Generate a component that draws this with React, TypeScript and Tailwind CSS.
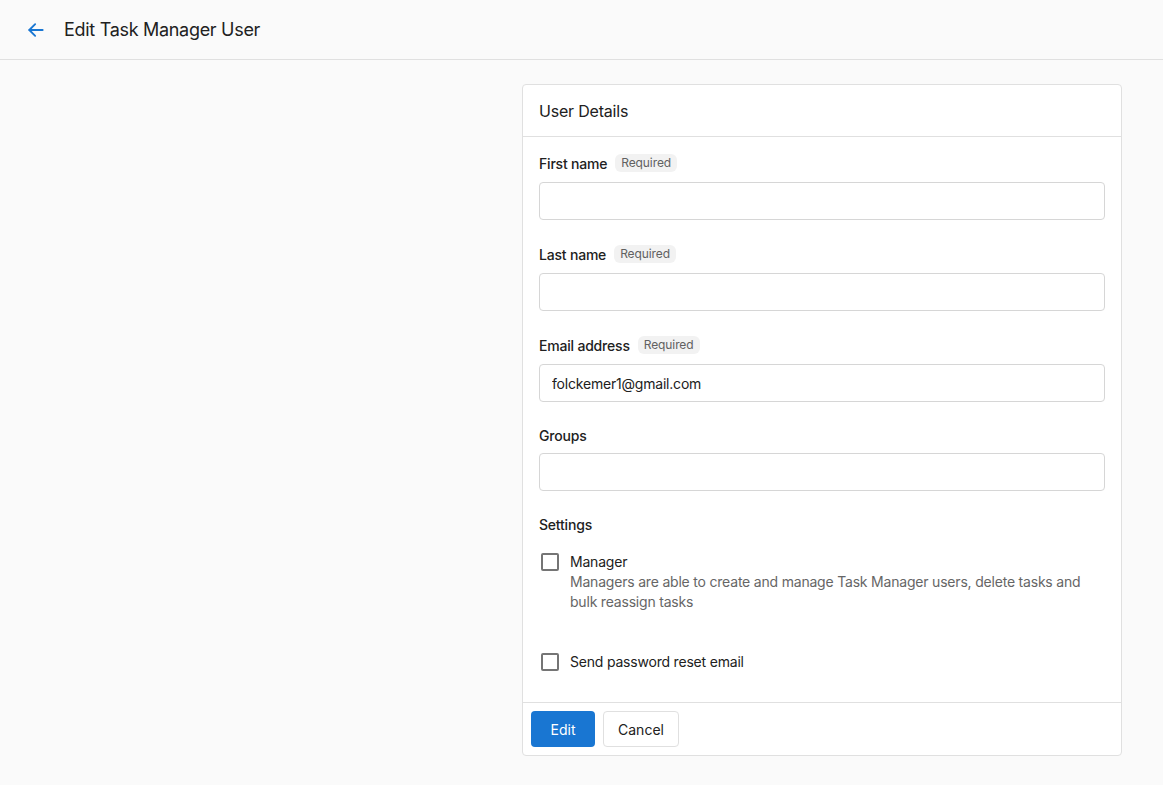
import React from "react"

function Field({ label, required, value }: { label: string; required?: boolean; value?: string }) {
  return (
    <div className="flex flex-col">
      <div className={`flex items-center gap-2 ${required ? "h-5" : "h-[18px]"}`}>
        <span className="text-[14px] font-medium tracking-[-0.2px] text-[#212121]">{label}</span>
        {required && (
          <span className="rounded-md bg-[#f2f2f2] px-[6px] h-[18px] flex items-center text-[12px] tracking-[-0.1px] text-[#616161]">
            Required
          </span>
        )}
      </div>
      <input
        defaultValue={value}
        className="mt-[9px] h-[38px] w-full rounded-[4px] border border-[#d6d6d6] bg-white px-3 text-[14px] tracking-[-0.2px] text-[#212121] outline-none"
      />
    </div>
  )
}

function Check({ label, help }: { label: string; help?: string }) {
  return (
    <label className="flex items-start gap-[11px] pl-[2px]">
      <span className="mt-[1px] h-[18px] w-[18px] shrink-0 rounded-[2px] border-2 border-[#757575] bg-white" />
      <span className="flex flex-col text-[14px] leading-5 tracking-[-0.2px]">
        <span className="text-[#212121]">{label}</span>
        {help && <span className="text-[#666666]">{help}</span>}
      </span>
    </label>
  )
}

export default function App() {
  return (
    <div className="min-h-[785px] bg-[#fafafa] font-['Inter',sans-serif] text-[#212121]">
      <header className="flex h-[60px] items-center border-b border-[#e0e0e0] px-[26px]">
        <svg width="20" height="20" viewBox="0 0 24 24" fill="none" stroke="#1976d2" strokeWidth="2.2" strokeLinecap="round" strokeLinejoin="round">
          <path d="M20 12H4" />
          <path d="M11 5l-7 7 7 7" />
        </svg>
        <h1 className="ml-[18px] text-[18px] font-normal tracking-[-0.3px]">Edit Task Manager User</h1>
      </header>

      <main className="flex pt-6 pl-[522px]">
        <div className="w-[600px] rounded-[4px] border border-[#e0e0e0] bg-white">
          <div className="flex h-[52px] items-center border-b border-[#e0e0e0] px-4 text-[16px] tracking-[-0.2px]">
            User Details
          </div>

          <div className="flex flex-col gap-6 px-4 pt-4 pb-[30px]">
            <Field label="First name" required />
            <Field label="Last name" required />
            <Field label="Email address" required value="folckemer1@gmail.com" />
            <Field label="Groups" />

            <div className="flex flex-col pt-px">
              <div className="h-[18px] text-[14px] font-medium leading-[18px] tracking-[-0.2px]">Settings</div>
              <div className="mt-[18px]">
                <Check
                  label="Manager"
                  help="Managers are able to create and manage Task Manager users, delete tasks and bulk reassign tasks"
                />
              </div>
              <div className="mt-10">
                <Check label="Send password reset email" />
              </div>
            </div>
          </div>

          <div className="flex gap-2 border-t border-[#e0e0e0] p-2">
            <button className="h-9 w-16 rounded-[4px] bg-[#1976d2] text-[14px] text-white">Edit</button>
            <button className="h-9 w-[76px] rounded-[4px] border border-[#e0e0e0] bg-white text-[14px] text-[#212121]">
              Cancel
            </button>
          </div>
        </div>
      </main>
    </div>
  )
}
